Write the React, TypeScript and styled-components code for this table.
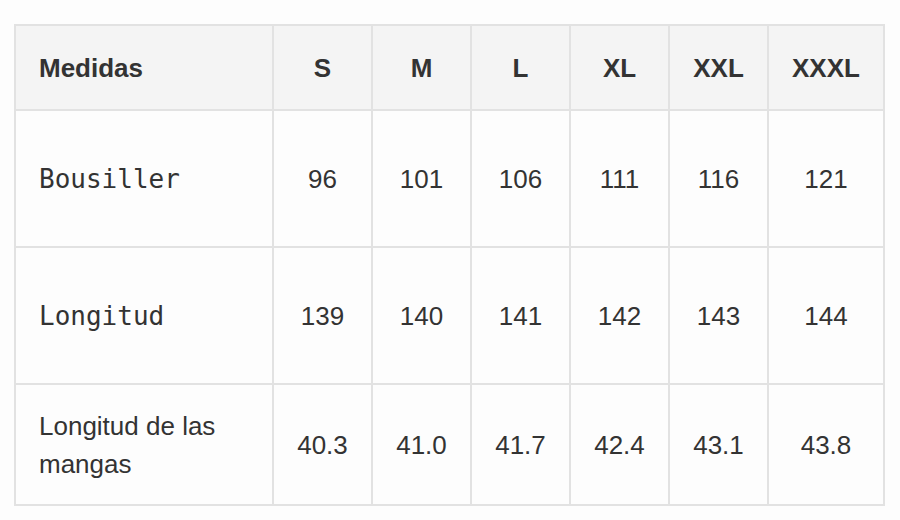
import { Fragment } from 'react';
import styled, { createGlobalStyle } from 'styled-components';

const GlobalStyle = createGlobalStyle`
  html, body {
    margin: 0;
    background: #fdfdfd;
  }
  body {
    padding: 24px 0 0 14px;
    font-family: "Liberation Sans", Arial, sans-serif;
    color: #333333;
  }
`;

const SizeTable = styled.div`
  display: grid;
  grid-template-columns: 258px repeat(5, 99px) 116px;
  grid-template-rows: 85px 137px 137px 121px;
  width: max-content;
  border-top: 2px solid #e2e2e2;
  border-left: 2px solid #e2e2e2;
`;

const Cell = styled.div<{ $head?: boolean; $label?: boolean; $mono?: boolean }>`
  box-sizing: border-box;
  display: flex;
  align-items: center;
  justify-content: ${(p) => (p.$label ? 'flex-start' : 'center')};
  padding: 0 ${(p) => (p.$label ? '23px' : '4px')};
  border-right: 2px solid #e2e2e2;
  border-bottom: 2px solid #e2e2e2;
  background: ${(p) => (p.$head ? '#f4f4f4' : '#fdfdfd')};
  font-family: ${(p) =>
    p.$mono ? '"DejaVu Sans Mono", "Liberation Mono", monospace' : '"Liberation Sans", Arial, sans-serif'};
  font-size: 26px;
  font-weight: ${(p) => (p.$head ? 700 : 400)};
  line-height: 38px;
  color: #333333;
`;

const sizes = ['S', 'M', 'L', 'XL', 'XXL', 'XXXL'];

const rows = [
  { label: 'Bousiller', mono: true, values: ['96', '101', '106', '111', '116', '121'] },
  { label: 'Longitud', mono: true, values: ['139', '140', '141', '142', '143', '144'] },
  { label: 'Longitud de las mangas', mono: false, values: ['40.3', '41.0', '41.7', '42.4', '43.1', '43.8'] },
];

export default function App() {
  return (
    <>
      <GlobalStyle />
      <SizeTable>
        <Cell $head $label>Medidas</Cell>
        {sizes.map((s) => (
          <Cell $head key={s}>{s}</Cell>
        ))}

        {rows.map((r) => (
          <Fragment key={r.label}>
            <Cell $label $mono={r.mono}>{r.label}</Cell>
            {r.values.map((v, i) => (
              <Cell key={i}>{v}</Cell>
            ))}
          </Fragment>
        ))}
      </SizeTable>
    </>
  );
}
